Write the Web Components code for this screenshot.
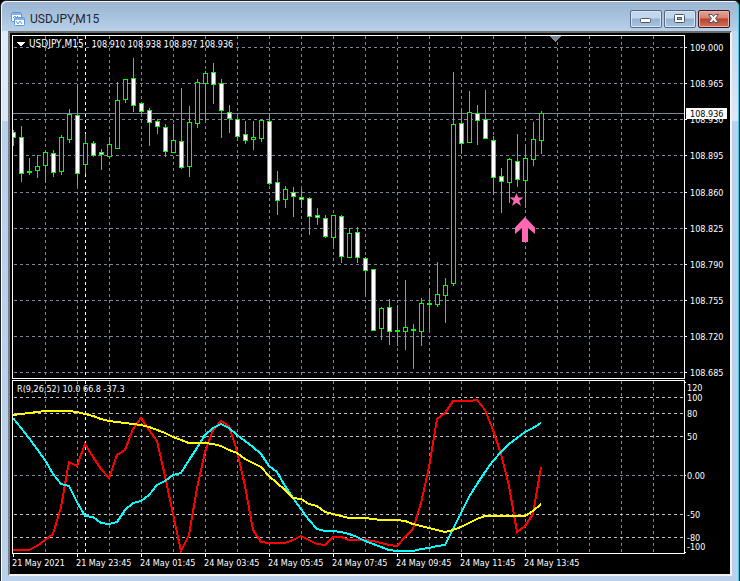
<!DOCTYPE html>
<html lang="en">
<head>
<meta charset="utf-8">
<title>USDJPY,M15</title>
<style>
  html, body { margin: 0; height: 100%; background: #000; }
</style>
</head>
<body>
<chart-window caption="USDJPY,M15">
  <price-pane></price-pane>
  <oscillator-pane></oscillator-pane>
  <time-axis labels="21 May 2021|21 May 23:45|24 May 01:45|24 May 03:45|24 May 05:45|24 May 07:45|24 May 09:45|24 May 11:45|24 May 13:45"></time-axis>
</chart-window>

<script>
const CHART_FONT = '9px/12px "DejaVu Sans Condensed", "DejaVu Sans", sans-serif';
const STEP = 8;
const FIRST_X = 13;
const GRID_XS = Array.from({ length: 120 }, (_, i) => 45 + i * 32);

/* Title bar button: kind is minimize, restore or close */
customElements.define('window-button', class extends HTMLElement {
  connectedCallback() {
    const kind = this.getAttribute('kind');
    const icons = {
      minimize: '<rect x="10.5" y="8.5" width="10" height="4" rx="1" fill="#fff" stroke="#535666"/>',
      restore: '<rect x="10.5" y="4.5" width="10" height="8" rx="1" fill="#fff" stroke="#535666"/><rect x="13.5" y="7.5" width="4" height="2" fill="#8fb0d4" stroke="#535666"/>',
      close: '<path d="M10.5 4.5h3.5l1.5 2 1.5-2h3.500l-3 4 3 4h-3.500l-1.500-2-1.500 2h-3.500l3-4z" fill="#fff" stroke="#535666" stroke-linejoin="round"/>'
    };
    this.attachShadow({ mode: 'open' }).innerHTML = `
      <style>
        :host { display: block; }
        button {
          display: block; box-sizing: border-box; width: 32px; height: 18px; padding: 0;
          border: 1px solid #566a85; border-radius: 2px;
          background: linear-gradient(#c3d7ec 0 7px, #94b1d1 8px, #a9c5e2 100%);
          box-shadow: inset 0 0 0 1px #d6e5f5;
        }
        :host([kind="close"]) button {
          border-color: #431422;
          background: linear-gradient(#e2a598 0, #d58171 7px, #b8402b 8px, #d2765d 100%);
          box-shadow: inset 0 0 0 1px #e6b0a4;
        }
        svg { display: block; margin: -1px 0 0 -1px; }
      </style>
      <button type="button" aria-label="${kind}"><svg width="32" height="18" viewBox="0 0 32 18">${icons[kind]}</svg></button>`;
  }
});

customElements.define('chart-window', class extends HTMLElement {
  connectedCallback() {
    this.attachShadow({ mode: 'open' }).innerHTML = `
      <style>
        :host {
          display: flex; flex-direction: column; box-sizing: border-box; min-height: 100vh;
          padding: 0 7px 5px 7px;
          border: 1px solid #20242a; border-width: 1px 1px 0 1px; border-radius: 6px 6px 0 0;
          background:
            linear-gradient(#e0ebf8, #dce8f6) left 1px top 30px / 6px 90px no-repeat,
            linear-gradient(#c3d7ee, #dce8f6) right 1px top 30px / 6px 90px no-repeat,
            linear-gradient(#99b4d1, #b9d1ea 31px);
          box-shadow: inset 1px 1px 0 #f4f8fc, inset -1px 0 0 #35d0ee;
        }
        header { display: flex; align-items: center; gap: 4px; height: 30px; padding: 6px 2px 0; box-sizing: border-box; }
        h1 { flex: 1; margin: 0; font: 12px/18px Roboto, sans-serif; color: #1c2733; }
        nav { display: flex; gap: 2px; }
        header svg { flex: none; }
        main {
          flex: 1; display: flex; flex-direction: column; gap: 1px;
          padding: 2px 0 0 2px; background: #000; overflow: hidden;
          border: solid; border-width: 2px; border-color: #6b6b6b #f2f2f2 #f2f2f2 #7c7f83;
        }
      </style>
      <header>
        <svg width="16" height="16" viewBox="0 0 16 16" aria-hidden="true">
          <rect x="1.500" y="1.500" width="10" height="9" rx="1" fill="#fff" stroke="#5b97e0"/>
          <path d="M2 3h9" stroke="#5b97e0" stroke-width="1.500"/>
          <path d="M3 7l2-2 1 2 2-2" fill="none" stroke="#5b97e0"/>
          <rect x="4.500" y="6.500" width="10" height="8" rx="1" fill="#fff" stroke="#5b97e0"/>
          <path d="M5 8h9" stroke="#5b97e0" stroke-width="1.500"/>
          <path d="M6 10l2 3 2-3 2 3" fill="none" stroke="#5b97e0"/>
        </svg>
        <h1></h1>
        <nav>
          <window-button kind="minimize"></window-button>
          <window-button kind="restore"></window-button>
          <window-button kind="close"></window-button>
        </nav>
      </header>
      <main><slot></slot></main>`;
    this.shadowRoot.querySelector('h1').textContent = this.getAttribute('caption');
  }
});

const paneStyle = `
  :host { display: flex; color: #fff; font: ${CHART_FONT}; }
  .plot { flex: 1; min-width: 0; position: relative; border: 1px solid #fff; }
  .axis { flex: none; width: 45px; }
  svg { display: block; width: 100%; shape-rendering: crispEdges; }
  .axis svg { overflow: visible; }
  .caption { position: absolute; left: 4px; top: 2px; margin: 0; display: flex; align-items: center; gap: 4px; white-space: pre; }
  .caption svg { width: 8px; height: 5px; }
  .symbol { font-size: 10px; padding-right: 4px; }
  text { font: ${CHART_FONT}; fill: #fff; }
`;
const vertical = (x, top, bottom, color) =>
  `<path d="M${x}.5 ${top}V${bottom}" stroke="${color}" stroke-dasharray="3 3"/>`;
const horizontal = (y, color, dash = '3 3') =>
  `<path d="M14 ${y}.5H4000" stroke="${color}" stroke-dasharray="${dash}"/>`;

/* Each candle: [high, low, body top, body bottom, filled] */
const CANDLES = [
  [130,146,132,138,1],[126,182,137,174,1],[158,175,171,173,1],[155,178,166,171,0],[150,182,152,166,0],
  [150,177,153,173,1],[135,175,137,172,0],[109,143,114,140,0],[84,186,115,174,1],[134,174,143,165,0],
  [141,157,143,156,1],[149,170,152,155,1],[137,158,144,157,0],[82,149,100,149,0],[79,103,79,100,0],
  [58,112,78,106,1],[103,115,103,112,1],[108,146,110,123,1],[119,134,121,127,1],[124,157,127,152,1],
  [124,153,140,153,0],[88,169,141,168,1],[106,177,122,167,0],[79,128,82,124,0],[71,121,73,84,0],
  [63,104,72,85,1],[79,138,83,111,1],[105,133,112,119,1],[117,141,119,137,1],[121,144,134,141,1],
  [121,150,137,140,0],[119,142,120,139,0],[113,185,121,184,1],[171,215,182,201,1],[186,208,189,200,0],
  [187,217,192,197,1],[189,208,197,200,1],[197,235,198,217,1],[208,225,215,218,1],[215,238,218,237,1],
  [215,246,215,238,0],[215,263,216,257,1],[228,258,233,258,0],[227,263,232,258,1],[257,294,258,271,1],
  [269,331,269,331,1],[307,340,308,329,0],[299,345,307,332,1],[305,346,330,332,1],[280,350,327,332,0],
  [324,369,329,331,1],[298,346,303,332,0],[289,330,303,305,1],[262,307,294,305,0],[278,323,285,296,0],
  [72,286,124,284,0],[109,154,123,144,1],[91,143,112,143,0],[105,145,113,121,1],[90,139,119,139,1],
  [136,195,140,178,1],[168,213,176,182,1],[158,203,159,183,0],[134,187,161,180,1],[146,208,158,181,0],
  [122,166,139,160,0],[111,154,113,141,0]
];

const PRICES = [[47,'109.000'],[83,'108.965'],[119,'108.930'],[155,'108.895'],[192,'108.860'],
  [228,'108.825'],[264,'108.790'],[300,'108.755'],[336,'108.720'],[372,'108.685']];

customElements.define('price-pane', class extends HTMLElement {
  connectedCallback() {
    const green = '#0f0', slate = '#778899';
    const candles = CANDLES.map(([high, low, top, bottom, filled], i) => {
      const x = FIRST_X + i * STEP, inner = bottom - top - 2;
      return `<rect x="${x}" y="${high}" width="1" height="${low - high}" fill="${green}"/>` +
        `<rect x="${x - 2}" y="${top}" width="5" height="${bottom - top}" fill="${green}"/>` +
        (inner > 0 ? `<rect x="${x - 1}" y="${top + 1}" width="3" height="${inner}" fill="${filled ? '#fff' : '#000'}"/>` : '');
    }).join('');
    this.attachShadow({ mode: 'open' }).innerHTML = `
      <style>${paneStyle}</style>
      <div class="plot">
        <svg height="342"><g transform="translate(-13 -36)" fill="none">
          ${PRICES.map(([y]) => horizontal(y, slate)).join('')}
          ${GRID_XS.map(x => vertical(x, 36, 378, slate)).join('')}
          ${vertical(85, 36, 378, '#fff')}
          <path d="M13 113.5H4000" stroke="${slate}"/>
          <path d="M550 36h11l-5.500 6z" fill="${slate}"/>
          ${candles}
          <g fill="#ff69b4" shape-rendering="auto">
            <path d="M516.500 193l1.800 4.600h5.200l-4.200 3.100 1.700 5.300-4.500-3.300-4.500 3.300 1.700-5.300-4.200-3.100h5.200z"/>
            <path d="M525 217l10 10.500v6.500l-7-6v14h-6v-14l-7 6v-6.500z"/>
          </g>
        </g></svg>
        <p class="caption"><svg viewBox="0 0 8 5"><path d="M0 0h8L4 5z" fill="#fff"/></svg><span class="symbol">USDJPY,M15</span><span>108.910 108.938 108.897 108.936</span></p>
      </div>
      <div class="axis">
        <svg height="344"><g transform="translate(-685 -35)">
          ${PRICES.map(([y, label]) => `<rect x="685" y="${y}" width="2" height="1" fill="#fff"/><text x="690" y="${y + 4}">${label}</text>`).join('')}
          <rect x="686" y="108" width="41" height="11" fill="#fff"/>
          <text x="690" y="117" style="fill:#000">108.936</text>
        </g></svg>
      </div>`;
  }
});

const RED = [550,550,550,546,540,534,507,462,466,444,457,469,478,455,450,429,418,430,441,476,514,551,535,488,452,430,421,
  426,451,486,530,542,543,543,543,540,536,540,544,545,537,537,540,540,540,541,543,545,546,537,529,503,467,419,413,401,401,
  401,400,410,430,454,486,532,526,514,467];
const CYAN = [418,428,438,449,460,474,484,486,502,516,517,523,524,522,510,503,501,495,485,481,475,473,460,448,435,428,424,
  428,435,441,447,454,466,472,486,498,509,520,529,531,531,532,534,537,541,544,547,550,551,551,551,549,548,546,545,529,513,
  497,484,472,461,452,444,438,432,428,423];
const YELLOW = [415,414,413,412,411,411,411,411,412,414,416,419,421,422,423,424,425,427,430,433,437,440,443,443,443,444,
  446,450,453,459,463,467,476,483,490,498,499,504,506,512,514,516,518,518,518,519,520,520,520,521,524,526,528,530,532,530,
  527,523,519,516,516,516,516,516,516,511,504];

customElements.define('oscillator-pane', class extends HTMLElement {
  connectedCallback() {
    const slate = '#778899', silver = '#c0c0c0';
    const line = (values, color) =>
      `<polyline stroke="${color}" stroke-width="2" points="${values.map((y, i) => `${FIRST_X + i * STEP},${y}`).join(' ')}"/>`;
    const levels = [[397,'100',silver],[413,'80',silver],[436,'50',silver],[475,'0.00',slate],[514,'-50',silver],[537,'-80',silver]];
    const scale = [...levels, [387,'120'], [546,'-100']];
    this.attachShadow({ mode: 'open' }).innerHTML = `
      <style>${paneStyle}</style>
      <div class="plot">
        <svg height="172"><g transform="translate(-13 -381)" fill="none">
          ${GRID_XS.map(x => vertical(x, 381, 553, slate)).join('')}
          ${levels.map(([y, , color]) => horizontal(y, color)).join('')}
          ${vertical(85, 381, 553, '#fff')}
          ${line(RED, '#f00')}${line(CYAN, '#0ff')}${line(YELLOW, '#ff0')}
        </g></svg>
        <p class="caption">R(9,26,52) 10.0 66.8 -37.3</p>
      </div>
      <div class="axis">
        <svg height="174"><g transform="translate(-685 -380)">
          ${[382, 475, 552].map(y => `<rect x="685" y="${y}" width="1" height="1" fill="#fff"/>`).join('')}
          ${scale.map(([y, label]) => `<text x="687" y="${y + 4}">${label}</text>`).join('')}
        </g></svg>
      </div>`;
  }
});

customElements.define('time-axis', class extends HTMLElement {
  connectedCallback() {
    this.attachShadow({ mode: 'open' }).innerHTML = `
      <style>
        :host { display: block; margin-top: -1px; color: #fff; font: ${CHART_FONT}; }
        ol { display: flex; margin: 0; padding: 0; list-style: none; }
        li { flex: none; width: 64px; white-space: nowrap; }
        li::before { content: ""; display: block; width: 1px; height: 3px; margin-left: 1px; background: #fff; }
      </style>
      <ol>${this.getAttribute('labels').split('|').map(t => `<li>${t}</li>`).join('')}</ol>`;
  }
});
</script>
</body>
</html>
